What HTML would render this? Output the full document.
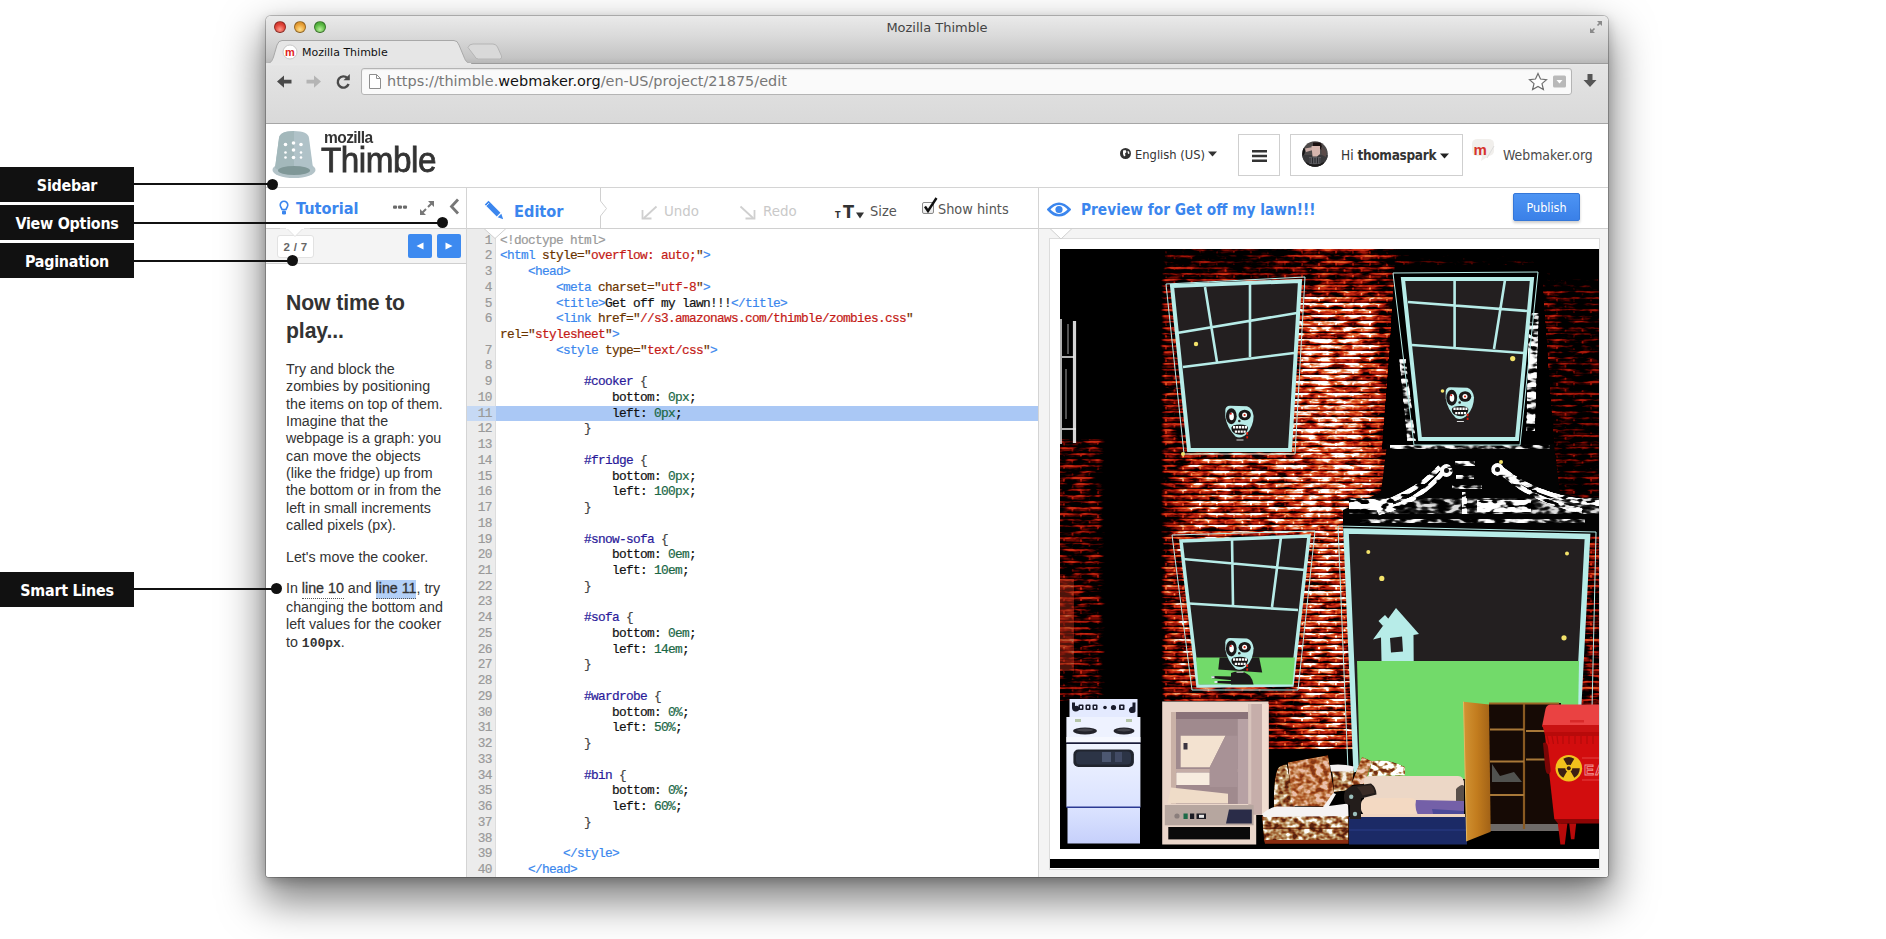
<!DOCTYPE html>
<html><head><meta charset="utf-8"><title>Mozilla Thimble</title>
<style>
*{box-sizing:border-box;margin:0;padding:0}
html,body{width:1886px;height:939px;overflow:hidden;background:#fff}
body{position:relative;font-family:"Liberation Sans",sans-serif;color:#333}
.abs{position:absolute}
.lbl{position:absolute;left:0;width:134px;height:35px;overflow:hidden;background:#111;color:#fff;font:bold 15.900px/38px "DejaVu Sans","Liberation Sans",sans-serif;text-align:center;letter-spacing:-0.25px}
.ln{position:absolute;height:2px;background:#111}
.dot{position:absolute;width:11px;height:11px;border-radius:50%;background:#111}
#win{position:absolute;left:266px;top:16px;width:1342px;height:861px;background:#fff;border-radius:5px 5px 3px 3px;box-shadow:0 20px 42px 4px rgba(0,0,0,.5),0 4px 12px rgba(0,0,0,.22),0 0 0 1px rgba(0,0,0,.22);overflow:hidden}
#chrome{position:absolute;left:0;top:0;width:100%;height:108px;background:linear-gradient(#eaeaea 0,#dadada 20px,#c4c4c4 42px,#b9b9b9 46.500px,#9c9c9c 46.500px,#9c9c9c 47.500px,#e9e9e9 47.500px,#e4e4e4 50px,#d9d9d9 107px);border-bottom:1px solid #a6a6a6}
#chrome>*{margin-top:-1px}

.tl{position:absolute;top:4.700px;margin-top:0 !important;width:12px;height:12px;border-radius:50%;border:1px solid rgba(0,0,0,.35)}
#title{position:absolute;left:0;top:3.500px;margin-top:0 !important;width:100%;text-align:center;font:13px/16px "DejaVu Sans","Liberation Sans",sans-serif;color:#444}
#tabtxt{position:absolute;left:36px;top:30.300px;font:11px/16px "DejaVu Sans","Liberation Sans",sans-serif;color:#111}
#url{position:absolute;left:95px;top:53px;width:1210.500px;height:26.500px;background:#fafafa;border:1px solid #b4b4b4;border-radius:3px;box-shadow:inset 0 1px 1px rgba(0,0,0,.08)}
#urltxt{position:absolute;left:25px;top:3px;font:14.450px/18px "DejaVu Sans","Liberation Sans",sans-serif;color:#777;white-space:pre}
#urltxt b{font-weight:normal;color:#111}

#app{position:absolute;left:0;top:108px;width:1342px;height:753px;background:#fff;font-family:"DejaVu Sans Condensed","DejaVu Sans","Liberation Sans",sans-serif}
#hdr{position:absolute;left:0;top:0;width:100%;height:64px;border-bottom:1px solid #d4d4d4}
.os{font-family:"DejaVu Sans Condensed","DejaVu Sans","Liberation Sans",sans-serif}
.hbtn{position:absolute;top:10px;height:42px;border:1px solid #cfcfcf;background:#fff}
#phdr{position:absolute;left:0;top:64px;width:100%;height:41px;border-bottom:1px solid #d0d0d0;background:#fff}
.vsep{position:absolute;top:64px;width:1px;background:#d4d4d4}
.blue{color:#3b86ee}
#pag{position:absolute;left:0;top:105px;width:200px;height:35px;background:#f4f4f4;border-bottom:1px solid #cfcfcf}
.pbtn{position:absolute;top:5px;width:24px;height:24px;background:#3d8af0;border-radius:2px}
#tut{position:absolute;left:20px;top:165px;width:160px;font-family:"Liberation Sans",sans-serif;color:#333}
#tut h1{font-size:21.2px;line-height:28px;font-weight:bold;color:#333;letter-spacing:-0.1px}
#tut p{font-size:14.25px;line-height:17.35px;margin-top:0}

.lbl{font-family:"DejaVu Sans Condensed","DejaVu Sans","Liberation Sans",sans-serif !important}
#ed{position:absolute;left:201px;top:105px;width:571px;height:648px;background:#fff;overflow:hidden}
#gut{position:absolute;left:0;top:0;width:29px;height:100%;background:#ececec;border-right:1px solid #ddd}
#code{position:absolute;left:0;top:3.600px;width:571px;font:12.800px/15.735px "Liberation Mono","DejaVu Sans Mono",monospace;letter-spacing:-0.681px;color:#111;-webkit-text-stroke:.2px}
.r{position:relative;height:15.735px;white-space:pre;padding-left:33px}
.r i{position:absolute;left:0;top:0;width:24.800px;text-align:right;font-style:normal;color:#999}
.r.hl{background:#aac8f5}
.r.hl i{background:#c6d9f4;width:29px;padding-right:4.200px}
.t{color:#3a87ee}.a{color:#6a3400}.s{color:#c41a16}.d{color:#999}.q{color:#2a1a9a}.n{color:#1a6644}.b{color:#444}

#pv{position:absolute;left:773px;top:105px;width:569px;height:648px;background:#f4f4f4;overflow:hidden}
#frame{position:absolute;left:10px;top:9px;width:551px;height:632px;background:#fff;border:1px solid #dcdcdc;overflow:hidden}
#pic{position:absolute;left:10px;top:10px;width:539px;height:600px;display:block}
</style></head><body>

<!-- callout labels -->
<div class="lbl" style="top:167px">Sidebar</div>
<div class="lbl" style="top:205px">View Options</div>
<div class="lbl" style="top:243px">Pagination</div>
<div class="lbl" style="top:572px">Smart Lines</div>

<div id="win">
 <div id="chrome">
  <div class="tl" style="left:8px;background:radial-gradient(circle at 50% 75%,#ff9a8a 0,#e0443a 55%,#c22a22 100%)"></div>
  <div class="tl" style="left:28px;background:radial-gradient(circle at 50% 75%,#ffe08a 0,#e9a23a 55%,#c8801e 100%)"></div>
  <div class="tl" style="left:48px;background:radial-gradient(circle at 50% 75%,#b8f09a 0,#5cba45 55%,#3c962c 100%)"></div>
  <div id="title">Mozilla Thimble</div>
  <svg class="abs" style="left:1323px;top:5px" width="14" height="14" viewBox="0 0 14 14"><path d="M8 1h5v5zM6 13H1V8z" fill="#8a8a8a"/><path d="M12 2L8.5 5.5M2 12l3.500-3.500" stroke="#8a8a8a" stroke-width="1.6"/></svg>
  <svg class="abs" style="left:0;top:24px" width="260" height="25" viewBox="0 0 260 25">
   <path d="M202 8.500Q203 5 207 5h20q3 0 4.500 3l4 9q1 3-2 3h-21q-3 0-4-3z" fill="#d9d9d9" stroke="#b5b5b5"/>
   <path d="M0 24.500C5 24.500 6 22 7.500 18L11 6Q12.500 1.500 16 1.500H188Q191.500 1.500 193 6L198 18C199.500 22 201 24.500 206 24.500" fill="#e6e6e6" stroke="#a8a8a8"/>
   <rect x="0" y="24" width="205" height="1" fill="#e6e6e6"/>
   <circle cx="24" cy="13" r="7" fill="#fff" stroke="#c8c8c8"/>
   <text x="24" y="17" text-anchor="middle" font-family="Liberation Sans,sans-serif" font-weight="bold" font-size="11" fill="#e0241c">m</text>
  </svg>
  <div id="tabtxt">Mozilla Thimble</div>
  <svg class="abs" style="left:9px;top:58px" width="80" height="18" viewBox="0 0 80 18">
   <path d="M2 8.600L9 2.500v4.200h7.500v3.800H9v4.200z" fill="#4a4a4a"/>
   <path d="M46 8.600L39 2.500v4.200h-7.500v3.800H39v4.200z" fill="#b4b4b4"/>
   <path d="M72.500 5.200A5.600 5.600 0 1 0 73.600 11" fill="none" stroke="#4a4a4a" stroke-width="2.400"/><path d="M68.500 7.200h6.300V1z" fill="#4a4a4a"/>
  </svg>
  <div id="url">
   <svg class="abs" style="left:7px;top:5px" width="12" height="15" viewBox="0 0 12 15"><path d="M.5.500h7l4 4v10H.5z" fill="#fff" stroke="#8e8e8e"/><path d="M7.500.500v4h4" fill="none" stroke="#8e8e8e"/></svg>
   <div id="urltxt">https://thimble.<b>webmaker.org</b>/en-US/project/21875/edit</div>
   <svg class="abs" style="left:1166px;top:3px" width="40" height="19" viewBox="0 0 40 19"><path d="M10 1.500l2.500 5.500 6 .600-4.500 4 1.400 5.900L10 14.400 4.600 17.500 6 11.600 1.500 7.600l6-.600z" fill="#fff" stroke="#6f6f6f" stroke-width="1.200"/><rect x="25" y="3.500" width="13" height="12" rx="1.500" fill="#b9b9b9"/><path d="M28.500 8h6l-3 3.500z" fill="#fff"/></svg>
  </div>
  <svg class="abs" style="left:1316px;top:58px" width="16" height="16" viewBox="0 0 16 16"><path d="M5.500 1h5v6h4L8 14 1.500 7h4z" fill="#555"/></svg>
 </div>
 <div id="app">
  <div id="hdr">
   <svg class="abs" style="left:6px;top:6px" width="45" height="49" viewBox="0 0 45 49">
    <ellipse cx="22" cy="40" rx="21.500" ry="8" fill="#b3c3c8"/>
    <path d="M3 38L7 8Q8 1 22 1Q36 1 37 8L41 38Q30 44 22 44Q12 44 3 38z" fill="#b0c2c8"/>
    <path d="M3 38L7 8Q8 1 22 1V44Q12 44 3 38z" fill="#a3b8bb"/>
    <ellipse cx="22" cy="40.500" rx="16" ry="4.500" fill="#7f9797"/>
    <g fill="#fff"><circle cx="13.500" cy="14.500" r="1.800"/><circle cx="21.500" cy="13" r="1.800"/><circle cx="29" cy="14.500" r="1.800"/><circle cx="13.500" cy="22.500" r="1.300"/><circle cx="21.500" cy="20" r="1.800"/><circle cx="29" cy="22.500" r="1.300"/><circle cx="13.500" cy="27.500" r="1.300"/><circle cx="21.500" cy="27.500" r="1.800"/><circle cx="29" cy="27.500" r="1.300"/></g>
   </svg>
   <div class="abs" style="left:57.500px;top:4px;font:bold 16.500px/18px 'Liberation Sans',sans-serif;color:#333;letter-spacing:-0.6px;transform:scaleX(.94);transform-origin:0 0">mozilla</div>
   <div class="abs" style="left:55px;top:16px;font:35px/40px 'Liberation Sans',sans-serif;color:#333;letter-spacing:-0.5px;transform:scaleX(.95);transform-origin:0 0;-webkit-text-stroke:.8px #333">Thimble</div>

   <svg class="abs" style="left:854px;top:24px" width="11" height="11" viewBox="0 0 11 11"><circle cx="5.500" cy="5.500" r="5.500" fill="#333"/><path d="M3 2.500l2.500-.500 1 2-1.500 1.500.500 2-1.500 1-1-2.500zM7.500 3l1.500.500.500 2-1.500.500z" fill="#fff"/></svg>
   <div class="abs os" style="left:869px;top:22px;font-size:12.800px;line-height:17px;color:#333">English (US)</div>
   <svg class="abs" style="left:942px;top:27px" width="9" height="6" viewBox="0 0 9 6"><path d="M0 .500h9L4.500 5.500z" fill="#333"/></svg>
   <div class="hbtn" style="left:972px;width:42px"><svg class="abs" style="left:13px;top:15px" width="15" height="12" viewBox="0 0 15 12"><path d="M0 1.250h15M0 6h15M0 10.750h15" stroke="#333" stroke-width="2.300"/></svg></div>
   <div class="hbtn" style="left:1024px;width:173px">
    <svg class="abs" style="left:10.500px;top:5.500px" width="26" height="26" viewBox="0 0 26 26"><clipPath id="avc"><circle cx="13" cy="13" r="12.800"/></clipPath><g clip-path="url(#avc)"><rect width="26" height="26" fill="#4e4a4a"/><rect x="0" y="14" width="26" height="12" fill="#3a3a3c"/><path d="M3 7.500l8-1.500 0 3-7 2z" fill="#c9aca6"/><path d="M9.500 5h8.500v8l-3 2.500h-4.500z" fill="#d6b6ae"/><path d="M11 1.500h8l1.500 8-2.500-1.500v-3h-7z" fill="#1a1010"/><path d="M0 7q3-1 3 3t-3 5z" fill="#141414"/><path d="M7 16h12v7H7z" fill="#5a5a5e"/><path d="M8 17v5M10.500 16.500v6M13 17v5M15.500 16.500v6M18 17v5" stroke="#2a2a2e" stroke-width="1"/><path d="M4 21q8 5 18 0v5H4z" fill="#1c1a1a"/><path d="M19 6l5 4v6l-4-2z" fill="#5a4a48"/></g></svg>
    <div class="abs os" style="left:50px;top:12px;font-size:13.500px;line-height:17px;color:#333;white-space:pre">Hi <b style="letter-spacing:-0.3px">thomaspark</b></div>
    <svg class="abs" style="left:149px;top:18px" width="9" height="6" viewBox="0 0 9 6"><path d="M0 .500h9L4.500 5.500z" fill="#222"/></svg>
   </div>
   <svg class="abs" style="left:1204px;top:13px" width="28" height="26" viewBox="0 0 28 26"><path d="M2 7Q2 2 8 2h10q6 0 6 5v7q0 4-5 5l-8 5 1-5H8q-6 0-6-5z" fill="#f1efec"/><path d="M24 9l-7 12" stroke="#ddd" stroke-width="1"/><text x="3.500" y="17.500" font-family="Liberation Sans,sans-serif" font-weight="bold" font-size="15" fill="#d6332d">m</text></svg>
   <div class="abs os" style="left:1237px;top:21.500px;font-size:13.900px;line-height:18px;color:#4a4a4a">Webmaker.org</div>
  </div>

  <div id="phdr">
   <svg class="abs" style="left:13px;top:12px" width="10" height="16" viewBox="0 0 10 16"><path d="M5 1.200a3.800 3.800 0 0 1 3.800 3.800c0 1.800-1.300 2.600-1.800 4.500h-4C2.500 7.600 1.200 6.800 1.200 5A3.800 3.800 0 0 1 5 1.200z" fill="none" stroke="#3b86ee" stroke-width="1.600"/><rect x="3" y="10.500" width="4" height="4" rx="1.200" fill="#3b86ee"/></svg>
   <div class="abs os blue" style="left:30px;top:10px;font-weight:bold;font-size:16.200px;line-height:22px">Tutorial</div>
   <svg class="abs" style="left:127px;top:16px" width="15" height="6" viewBox="0 0 15 6"><rect x="0" y="1.500" width="4" height="3.200" rx="1" fill="#6a6a6a"/><rect x="5" y="1.500" width="4" height="3.200" rx="1" fill="#6a6a6a"/><rect x="10" y="1.500" width="4" height="3.200" rx="1" fill="#6a6a6a"/></svg>
   <svg class="abs" style="left:153px;top:12px" width="16" height="16" viewBox="0 0 16 16"><path d="M9 1h6v6zM7 15H1V9z" fill="#777"/><path d="M13.500 2.500L9 7M2.500 13.500L7 9" stroke="#777" stroke-width="2"/></svg>
   <svg class="abs" style="left:183px;top:10px" width="11" height="17" viewBox="0 0 11 17"><path d="M9 1.500L2.500 8.500 9 15.500" fill="none" stroke="#777" stroke-width="2.800"/></svg>

   <svg class="abs" style="left:217px;top:11px" width="22" height="22" viewBox="0 0 24 24"><path d="M2 6l4-4 13 13-4 4z" fill="#3b86ee"/><path d="M16 20l4-4 2 6z" fill="#3b86ee"/><path d="M3.500 7.500l3-3" stroke="#fff" stroke-width="1"/></svg>
   <div class="abs os blue" style="left:248px;top:12px;font-weight:bold;font-size:16.200px;line-height:24px">Editor</div>
   <svg class="abs" style="left:334px;top:0" width="10" height="41" viewBox="0 0 10 41"><path d="M.500 0v13l6 7.500-6 7.500v13" fill="none" stroke="#d0d0d0"/></svg>
   <svg class="abs" style="left:375px;top:17px" width="17" height="15" viewBox="0 0 17 15"><path d="M15.500 1.500L3 13" stroke="#cfcfcf" stroke-width="1.800" fill="none"/><path d="M1.500 5v8.500h9" stroke="#cfcfcf" stroke-width="1.800" fill="none"/></svg>
   <div class="abs os" style="left:398px;top:13px;font-size:14.900px;line-height:20px;color:#c9c9c9">Undo</div>
   <svg class="abs" style="left:473px;top:17px" width="17" height="15" viewBox="0 0 17 15"><path d="M1.500 1.500L14 13" stroke="#cfcfcf" stroke-width="1.800" fill="none"/><path d="M15.500 5v8.500h-9" stroke="#cfcfcf" stroke-width="1.800" fill="none"/></svg>
   <div class="abs os" style="left:497px;top:13px;font-size:14.900px;line-height:20px;color:#c9c9c9">Redo</div>
   <div class="abs os" style="left:569px;top:21px;font-weight:bold;font-size:9px;line-height:12px;color:#333">T</div>
   <div class="abs os" style="left:577px;top:12px;font-weight:bold;font-size:18px;line-height:24px;color:#333">T</div>
   <svg class="abs" style="left:590px;top:24px" width="8" height="7" viewBox="0 0 8 7"><path d="M0 .500h8L4 6.500z" fill="#333"/></svg>
   <div class="abs os" style="left:604px;top:13px;font-size:14.500px;line-height:20px;color:#555">Size</div>
   <div class="abs" style="left:656px;top:14px;width:12px;height:12px;border:1px solid #8a8a8a;border-radius:2px;background:linear-gradient(#fff,#e8e8e8)"></div>
   <svg class="abs" style="left:656px;top:8px" width="18" height="18" viewBox="0 0 18 18"><path d="M3 10.500l3 4.500L14.500 2" fill="none" stroke="#111" stroke-width="2.400"/></svg>
   <div class="abs os" style="left:672px;top:11px;font-size:14.350px;line-height:20px;color:#555">Show hints</div>

   <svg class="abs" style="left:781px;top:14px" width="24" height="15" viewBox="0 0 24 15"><path d="M1.500 7.500Q12-4 22.500 7.500Q12 19 1.500 7.500z" fill="#fff" stroke="#3b86ee" stroke-width="2.600"/><circle cx="12" cy="7.500" r="3.600" fill="#3b86ee"/></svg>
   <div class="abs os blue" style="left:815px;top:11px;font-weight:bold;font-size:15.300px;line-height:22px;white-space:pre">Preview for Get off my lawn!!!</div>
   <div class="abs os" style="left:1247px;top:5px;width:67px;height:28px;background:linear-gradient(#4d94f3,#3a80e8);border:1px solid #3577d8;border-radius:2px;box-shadow:0 2px 3px rgba(0,0,0,.2);color:#fff;font-size:12.500px;line-height:28px;text-align:center">Publish</div>
  </div>
  <div class="vsep" style="left:200px;height:689px"></div>
  <div class="vsep" style="left:772px;height:689px"></div>

  <div id="pag">
   <div class="abs" style="left:11px;top:6px;width:37px;height:23px;background:#fff;border:1px solid #e2e2e2;border-radius:3px;font:bold 11.500px/22px 'Liberation Sans',sans-serif;color:#666;text-align:center;letter-spacing:.3px">2 / 7</div>
   <svg class="abs" style="left:14px;top:-1px" width="30" height="10" viewBox="0 0 30 10"><path d="M0 .500h7l8 8 8-8h7" fill="#fff" stroke="#e2e2e2"/><path d="M6 0h18" stroke="#fff" stroke-width="2"/></svg>
   <div class="pbtn" style="left:142px"><svg class="abs" style="left:8px;top:8px" width="8" height="8" viewBox="0 0 8 8"><path d="M7.500 .500v7L.500 4z" fill="#fff"/></svg></div>
   <div class="pbtn" style="left:171px"><svg class="abs" style="left:8px;top:8px" width="8" height="8" viewBox="0 0 8 8"><path d="M.500 .500v7L7.500 4z" fill="#fff"/></svg></div>
  </div>

  <div id="ed"><div id="gut"></div><div id="code">
<div class="r"><i>1</i><span class="d">&lt;!doctype html&gt;</span></div>
<div class="r"><i>2</i><span class="t">&lt;html</span> <span class="a">style=&quot;</span><span class="s">overflow: auto;</span><span class="a">&quot;</span><span class="t">&gt;</span></div>
<div class="r"><i>3</i>    <span class="t">&lt;head&gt;</span></div>
<div class="r"><i>4</i>        <span class="t">&lt;meta</span> <span class="a">charset=&quot;</span><span class="s">utf-8</span><span class="a">&quot;</span><span class="t">&gt;</span></div>
<div class="r"><i>5</i>        <span class="t">&lt;title&gt;</span>Get off my lawn!!!<span class="t">&lt;/title&gt;</span></div>
<div class="r"><i>6</i>        <span class="t">&lt;link</span> <span class="a">href=&quot;</span><span class="s">//s3.amazonaws.com/thimble/zombies.css</span><span class="a">&quot;</span></div>
<div class="r"><i></i><span class="a">rel=&quot;</span><span class="s">stylesheet</span><span class="a">&quot;</span><span class="t">&gt;</span></div>
<div class="r"><i>7</i>        <span class="t">&lt;style</span> <span class="a">type=&quot;</span><span class="s">text/css</span><span class="a">&quot;</span><span class="t">&gt;</span></div>
<div class="r"><i>8</i></div>
<div class="r"><i>9</i>            <span class="q">#cooker</span> <span class="b">{</span></div>
<div class="r"><i>10</i>                bottom: <span class="n">0px</span>;</div>
<div class="r hl"><i>11</i>                left: <span class="n">0px</span>;</div>
<div class="r"><i>12</i>            <span class="b">}</span></div>
<div class="r"><i>13</i></div>
<div class="r"><i>14</i>            <span class="q">#fridge</span> <span class="b">{</span></div>
<div class="r"><i>15</i>                bottom: <span class="n">0px</span>;</div>
<div class="r"><i>16</i>                left: <span class="n">100px</span>;</div>
<div class="r"><i>17</i>            <span class="b">}</span></div>
<div class="r"><i>18</i></div>
<div class="r"><i>19</i>            <span class="q">#snow-sofa</span> <span class="b">{</span></div>
<div class="r"><i>20</i>                bottom: <span class="n">0em</span>;</div>
<div class="r"><i>21</i>                left: <span class="n">10em</span>;</div>
<div class="r"><i>22</i>            <span class="b">}</span></div>
<div class="r"><i>23</i></div>
<div class="r"><i>24</i>            <span class="q">#sofa</span> <span class="b">{</span></div>
<div class="r"><i>25</i>                bottom: <span class="n">0em</span>;</div>
<div class="r"><i>26</i>                left: <span class="n">14em</span>;</div>
<div class="r"><i>27</i>            <span class="b">}</span></div>
<div class="r"><i>28</i></div>
<div class="r"><i>29</i>            <span class="q">#wardrobe</span> <span class="b">{</span></div>
<div class="r"><i>30</i>                bottom: <span class="n">0%</span>;</div>
<div class="r"><i>31</i>                left: <span class="n">50%</span>;</div>
<div class="r"><i>32</i>            <span class="b">}</span></div>
<div class="r"><i>33</i></div>
<div class="r"><i>34</i>            <span class="q">#bin</span> <span class="b">{</span></div>
<div class="r"><i>35</i>                bottom: <span class="n">0%</span>;</div>
<div class="r"><i>36</i>                left: <span class="n">60%</span>;</div>
<div class="r"><i>37</i>            <span class="b">}</span></div>
<div class="r"><i>38</i></div>
<div class="r"><i>39</i>         <span class="t">&lt;/style&gt;</span></div>
<div class="r"><i>40</i>    <span class="t">&lt;/head&gt;</span></div>
<div class="r"><i>41</i>    <span class="t">&lt;body&gt;</span></div>
  </div>
   <svg class="abs" style="left:13px;top:-1px" width="30" height="12" viewBox="0 0 30 12"><path d="M0 .500h4l11 10 11-10h4" fill="#fff" stroke="#d0d0d0"/><path d="M4.500 0h21" stroke="#fff" stroke-width="2"/></svg>
  </div>
  <div id="pv">
   <div id="frame">
<svg id="pic" viewBox="0 0 539 600">
 <defs>
  <linearGradient id="fadeR" x1="1" y1="0" x2="0" y2="0"><stop offset="0" stop-color="#000"/><stop offset="1" stop-color="#000" stop-opacity="0"/></linearGradient>
  <linearGradient id="fadeL" x1="0" y1="0" x2="1" y2="0"><stop offset="0" stop-color="#000"/><stop offset="1" stop-color="#000" stop-opacity="0"/></linearGradient>
  <linearGradient id="ck" x1="0" y1="0" x2="0" y2="1"><stop offset="0" stop-color="#f0f4ff"/><stop offset="1" stop-color="#dae2ff"/></linearGradient>
  <linearGradient id="ck2" x1="0" y1="0" x2="0" y2="1"><stop offset="0" stop-color="#dbe3ff"/><stop offset="1" stop-color="#c6d0fb"/></linearGradient>
  <linearGradient id="wood" x1="0" y1="0" x2="1" y2="0"><stop offset="0" stop-color="#d29434"/><stop offset=".5" stop-color="#c27c1e"/><stop offset="1" stop-color="#a26216"/></linearGradient>
  <pattern id="flo" width="23" height="19" patternUnits="userSpaceOnUse">
   <rect width="23" height="19" fill="#b79474"/>
   <circle cx="5" cy="5" r="3.600" fill="#7a2a1c"/><circle cx="16" cy="13" r="4" fill="#8a3a24"/><circle cx="15" cy="3" r="2.600" fill="#e8dccb"/><circle cx="4" cy="14" r="3" fill="#e4d4c0"/><circle cx="10" cy="9" r="2" fill="#5a3a28"/><circle cx="21" cy="7" r="2" fill="#d8c4a8"/>
  </pattern>
  <filter id="bl" filterUnits="userSpaceOnUse" x="0" y="0" width="539" height="600"><feGaussianBlur stdDeviation="11"/></filter>
  <filter id="bwf" filterUnits="userSpaceOnUse" x="0" y="0" width="539" height="600" color-interpolation-filters="sRGB">
   <feTurbulence type="fractalNoise" baseFrequency="0.09 0.2" numOctaves="2" seed="5" result="t0"/>
   <feColorMatrix in="t0" type="matrix" values="2.4 0 0 0 -0.7  2.4 0 0 0 -0.7  2.4 0 0 0 -0.7  0 0 0 0 1" result="t"/>
   <feComposite in="SourceGraphic" in2="t" operator="arithmetic" k1="1.7" k2="0.15" k3="0" k4="0" result="m"/>
   <feComponentTransfer in="m"><feFuncR type="table" tableValues="0 0 .15 .8 1 1"/><feFuncG type="table" tableValues="0 0 .15 .8 1 1"/><feFuncB type="table" tableValues="0 0 .15 .8 1 1"/></feComponentTransfer>
   <feComposite in2="SourceGraphic" operator="in"/>
  </filter>
  <filter id="flof" filterUnits="userSpaceOnUse" x="190" y="495" width="170" height="105" color-interpolation-filters="sRGB">
   <feTurbulence type="fractalNoise" baseFrequency="0.16 0.2" numOctaves="2" seed="3" result="t0"/>
   <feColorMatrix in="t0" type="matrix" values="2.6 0 0 0 -0.8  2.6 0 0 0 -0.8  2.6 0 0 0 -0.8  0 0 0 0 1" result="t"/>
   <feComposite in="SourceGraphic" in2="t" operator="arithmetic" k1="1.500" k2="0.25" k3="0" k4="0" result="m"/>
   <feComponentTransfer in="m">
    <feFuncR type="table" tableValues="0.165 0.290 0.416 0.518 0.596 0.659 0.706 0.769 0.847 0.925 1.000"/>
    <feFuncG type="table" tableValues="0.078 0.110 0.165 0.235 0.329 0.439 0.541 0.643 0.769 0.878 1.000"/>
    <feFuncB type="table" tableValues="0.031 0.047 0.071 0.110 0.157 0.251 0.345 0.471 0.627 0.800 1.000"/>
   </feComponentTransfer>
   <feComposite in2="SourceGraphic" operator="in"/>
  </filter>
  <filter id="wallf" filterUnits="userSpaceOnUse" x="0" y="0" width="539" height="600" color-interpolation-filters="sRGB">
   <feTurbulence type="fractalNoise" baseFrequency="0.07 0.19" numOctaves="3" seed="11" result="t0"/>
   <feColorMatrix in="t0" type="matrix" values="2.1 0 0 0 -0.55  2.1 0 0 0 -0.55  2.1 0 0 0 -0.55  0 0 0 0 1" result="t"/>
   <feComposite in="SourceGraphic" in2="t" operator="arithmetic" k1="1.2" k2="0.5" k3="0" k4="-0.13" result="m"/>
   <feComponentTransfer in="m">
    <feFuncR type="table" tableValues="0.000 0.000 0.000 0.102 0.227 0.361 0.486 0.596 0.682 0.745 0.792 0.831 0.863 0.886 0.910 0.925 0.941 0.949 0.957 0.973 1.000"/>
    <feFuncG type="table" tableValues="0.000 0.000 0.000 0.000 0.008 0.024 0.047 0.078 0.110 0.141 0.180 0.227 0.290 0.361 0.447 0.549 0.659 0.753 0.839 0.910 1.000"/>
    <feFuncB type="table" tableValues="0.000 0.000 0.000 0.000 0.000 0.000 0.016 0.031 0.047 0.063 0.078 0.094 0.118 0.157 0.220 0.345 0.502 0.659 0.784 0.878 1.000"/>
   </feComponentTransfer>
  </filter>
  <radialGradient id="L1" cx="265" cy="170" r="1" gradientUnits="userSpaceOnUse" gradientTransform="translate(265 170) scale(150 300) translate(-265 -170)">
   <stop offset="0" stop-color="#b0b0b0"/><stop offset=".4" stop-color="#909090"/><stop offset=".8" stop-color="#606060"/><stop offset="1" stop-color="#000"/>
  </radialGradient>
  <radialGradient id="L2" cx="200" cy="380" r="1" gradientUnits="userSpaceOnUse" gradientTransform="translate(200 380) scale(150 160) translate(-200 -380)">
   <stop offset="0" stop-color="#8a8a8a"/><stop offset=".7" stop-color="#707070"/><stop offset="1" stop-color="#000" stop-opacity="0"/>
  </radialGradient>
  <radialGradient id="L3" cx="520" cy="200" r="1" gradientUnits="userSpaceOnUse" gradientTransform="translate(520 200) scale(90 260) translate(-520 -200)">
   <stop offset="0" stop-color="#6a6a6a"/><stop offset=".7" stop-color="#505050"/><stop offset="1" stop-color="#000" stop-opacity="0"/>
  </radialGradient>
  <radialGradient id="glow1" cx="265" cy="170" r="1" gradientUnits="userSpaceOnUse" gradientTransform="translate(265 170) scale(130 260) translate(-265 -170)">
   <stop offset="0" stop-color="#f0742a"/><stop offset=".3" stop-color="#e2451a"/><stop offset=".62" stop-color="#c01c08"/><stop offset=".85" stop-color="#6a0800"/><stop offset="1" stop-color="#000"/>
  </radialGradient>
  <radialGradient id="glow2" cx="215" cy="390" r="1" gradientUnits="userSpaceOnUse" gradientTransform="translate(215 390) scale(140 150) translate(-215 -390)">
   <stop offset="0" stop-color="#d8381a"/><stop offset=".6" stop-color="#b81a08"/><stop offset=".85" stop-color="#600600"/><stop offset="1" stop-color="#000" stop-opacity="0"/>
  </radialGradient>
  <radialGradient id="glow3" cx="520" cy="170" r="1" gradientUnits="userSpaceOnUse" gradientTransform="translate(520 170) scale(60 130) translate(-520 -170)">
   <stop offset="0" stop-color="#a81405"/><stop offset=".6" stop-color="#7a0a02"/><stop offset="1" stop-color="#000" stop-opacity="0"/>
  </radialGradient>
  <pattern id="brick" width="17" height="12" patternUnits="userSpaceOnUse">
   <path d="M0 1h17M0 7h17" stroke="#fff" stroke-width="2" opacity=".6"/>
   <path d="M4 2v3M12.500 8v3" stroke="#fff" stroke-width="1.800" opacity=".58"/>
   <path d="M0 5.300h17M0 11.300h17" stroke="#000" stroke-width="1.400" opacity=".55"/>
  </pattern>
  <radialGradient id="mk" cx="250" cy="250" r="1" gradientUnits="userSpaceOnUse" gradientTransform="translate(250 250) scale(150 300) translate(-250 -250)">
   <stop offset="0" stop-color="#fff"/><stop offset=".6" stop-color="#bbb"/><stop offset="1" stop-color="#000"/>
  </radialGradient>
  <mask id="bm"><rect width="539" height="600" fill="url(#mk)"/></mask>
  <g id="lmap">
   <g filter="url(#bl)">
    <rect x="100" y="-20" width="452" height="540" fill="#4c4c4c"/>
    <rect x="130" y="200" width="170" height="95" fill="#8c8c8c"/>
    <rect x="232" y="50" width="80" height="230" fill="#aaaaaa"/>
    <rect x="250" y="90" width="45" height="150" fill="#bcbcbc"/>
    <rect x="240" y="280" width="50" height="230" fill="#929292"/>
    <rect x="105" y="290" width="40" height="150" fill="#747474"/>
    <rect x="470" y="-20" width="80" height="60" fill="#111"/>
    <rect x="100" y="-20" width="135" height="46" fill="#303030"/><rect x="330" y="-20" width="150" height="40" fill="#151515"/><rect x="90" y="20" width="32" height="260" fill="#4c4c4c"/>
    <rect x="485" y="30" width="70" height="260" fill="#363636"/>
   </g>
   <rect x="0" y="190" width="54" height="262" fill="#3e3e3e"/>
   <rect x="0" y="330" width="14" height="95" fill="#585858"/>
   <rect x="54" y="0" width="41" height="600" fill="#000"/>
   <rect x="38" y="0" width="16" height="600" fill="url(#fadeR)"/>
   <rect x="95" y="0" width="10" height="600" fill="url(#fadeL)"/>
   <rect x="0" y="0" width="100" height="190" fill="#000"/>
   <path d="M335 16L481 16 494 200 322 200 329 110z" fill="#000" opacity=".88"/>
  </g>
  <mask id="lmask" maskUnits="userSpaceOnUse" x="0" y="0" width="539" height="600"><g filter="url(#gain)"><use href="#lmap"/></g></mask>
  <filter id="gain" filterUnits="userSpaceOnUse" x="0" y="0" width="539" height="600" color-interpolation-filters="sRGB"><feComponentTransfer><feFuncR type="linear" slope="2.2" intercept="-0.25"/><feFuncG type="linear" slope="2.2" intercept="-0.25"/><feFuncB type="linear" slope="2.2" intercept="-0.25"/></feComponentTransfer></filter>
 </defs>
 <rect width="539" height="600" fill="#000"/>
 <g filter="url(#wallf)">
  <rect width="539" height="600" fill="#000"/>
  <use href="#lmap"/>
  <rect width="539" height="600" fill="url(#brick)" mask="url(#lmask)"/>
 </g>
 <path d="M1 70v125M0 108h14M0 180h16" stroke="#ddd" stroke-width="2" opacity=".8"/><path d="M14.500 72v122" stroke="#eee" stroke-width="3.200" opacity=".9"/><path d="M8 75v30M6 120v50" stroke="#888" stroke-width="2" opacity=".6"/>
 <rect x="0" y="330" width="14" height="92" fill="#8a2414" opacity=".55"/>
 <rect x="0" y="500" width="539" height="100" fill="#000"/>
 <rect x="0" y="452" width="205" height="100" fill="#000"/>
 <!-- pediment -->
 <path d="M327 195h167l6 48 39 12v32H283v-26l38-18z" fill="#030303"/>
 <g filter="url(#bwf)">
  <path d="M289 249h250v16H289z" fill="#5c5c5c"/>
  <path d="M289 250h44v11h-44zM417 251h54v12h-54z" fill="#e0e0e0"/>
  <path d="M300 260q50-10 80-42M318 264q42-12 66-42" stroke="#e8e8e8" stroke-width="5" fill="none"/>
  <path d="M539 254q-60-4-100-36M522 262q-54-12-82-40" stroke="#e8e8e8" stroke-width="5" fill="none"/>
  <circle cx="386.500" cy="221.500" r="6.500" fill="#fff"/><circle cx="437.500" cy="220.500" r="6.500" fill="#fff"/>
  <rect x="402" y="243" width="4.500" height="22" fill="#fff"/>
  <path d="M395 212h20v5h-20zM396 226h18v4h-18zM392 236h30v4h-30z" fill="#9a9a9a"/>
  <path d="M469 64l10 0 -4 118h-9z" fill="#9c9c9c"/>
  <path d="M339 110l7 0 10 82h-9z" fill="#7a7a7a"/>
  <path d="M330 196h160v4h-160z" fill="#7a7a7a"/>
  <path d="M300 270h225v4h-225z" fill="#777"/>
 </g>
 <circle cx="386.500" cy="221.500" r="2.500" fill="#111"/><circle cx="437.500" cy="220.500" r="2.500" fill="#111"/>
 <!-- window 1 -->
 <g stroke="#b7ece8" stroke-linejoin="miter">
  <path d="M106 35L245 28 235 205 124 205z" fill="none" stroke-width="1"/>
  <path d="M112 37L240 32 230 201 129 201z" fill="#231f20" stroke-width="4"/>
  <path d="M117 84L237 64M123 118L234 104M145 38L157 113M190 35L190 108" stroke-width="2.600" fill="none"/>
 </g>
 <!-- window 2 -->
 <g stroke="#b7ece8">
  <path d="M333 24L478 23 460 196 354 196z" fill="none" stroke-width="1"/>
  <path d="M343 30L472 30 457 190 360 190z" fill="#231f20" stroke-width="4"/>
  <path d="M348 53L467 62M352 96L464 104M394.600 31V98M445 31L434 100" stroke-width="2.600" fill="none"/>
 </g>
 <!-- window 3 -->
 <g stroke="#b7ece8">
  <path d="M112 286L255 282 238 441 132 441z" fill="none" stroke-width="1"/>
  <path d="M121 292L249 287 232 436 138 437z" fill="#231f20" stroke-width="3.500"/>
  <path d="M136 408.500H235L232.500 435.500H138.500z" fill="#72da6a" stroke="none"/>
  <path d="M123 310L245 321M129 354.500L238 361M172 289L173 356M221 288L212 358" stroke-width="2.600" fill="none"/>
 </g>
 <!-- window 4 -->
 <g>
  <path d="M286 282L527.500 287.500 518 470 296 520z" fill="#231f20" stroke="#b7ece8" stroke-width="5.500"/>
  <path d="M278 277L536 283 532 460M288 520L278 277" fill="none" stroke="#b7ece8" stroke-width="1"/>
  <path d="M297 412H519L517 530H300z" fill="#72da6a"/>
  <path d="M313 390.500L336 359 359 385 353.500 386 353.700 412H321.500L321 388.500z" fill="#b7ece8"/>
  <path d="M318.500 372L325 366 329.500 371 323 377z" fill="#b7ece8"/>
  <path d="M330 389l12-1.500 1 15-12 1z" fill="#231f20"/>
 </g>
 <!-- stars -->
 <g fill="#f3e26a"><circle cx="136" cy="95" r="2.200"/><circle cx="123" cy="205" r="2"/><circle cx="452.700" cy="109.600" r="2.600"/><circle cx="382.500" cy="142" r="1.800"/><circle cx="308.300" cy="303" r="2"/><circle cx="321.800" cy="329.400" r="2.600"/><circle cx="507" cy="304.500" r="2"/><circle cx="504" cy="388.800" r="2.600"/><circle cx="441" cy="213" r="2"/></g>
 <!-- zombies -->
 <g id="z1"><path d="M165.300 161Q165.500 157 170 156.800L187 157.300Q192.500 159 193.600 167Q193.500 177 187 184.500Q181 190.500 175.500 187.500Q167 179 165.300 168z" fill="#b7ece8"/><ellipse cx="171.300" cy="167.200" rx="5.400" ry="8" fill="#1a1718"/><ellipse cx="184.700" cy="166" rx="6.200" ry="5.200" fill="#1a1718"/><ellipse cx="171.600" cy="167.400" rx="2.300" ry="3.800" fill="#fff"/><circle cx="170.800" cy="164.800" r="1" fill="#d01010"/><circle cx="184.600" cy="166" r="2.500" fill="#fff"/><circle cx="184.600" cy="166" r="1.100" fill="#c8200c"/><circle cx="179.300" cy="172" r="1.300" fill="#2a2626"/><path d="M171.500 178.500Q172 175.500 180 175.500Q188 175.500 188 179Q187.500 183.500 183 185.500Q178 186.500 174 184Q171 181.500 171.500 178.500z" fill="#151313"/><path d="M173 178.300h14" stroke="#fff" stroke-width="2.400" stroke-dasharray="2.300 .7"/><path d="M174.800 182.600h11" stroke="#fff" stroke-width="2.200" stroke-dasharray="2.200 .7"/><rect x="186.300" y="183.200" width="1.800" height="2.600" fill="#e01808"/><rect x="186.300" y="187.200" width="1.800" height="2.200" fill="#e01808"/><path d="M176.500 191h7" stroke="#ddd" stroke-width="1"/></g>
 <use href="#z1" x="220.400" y="-18.500"/>
 <path d="M159.600 408.500H199.200L202.200 423.400L158.300 420.400z" fill="#1d1a1b"/>
 <path d="M171 424Q182 420 190 427Q193 431 193.500 435.500H171z" fill="#1d1a1b"/>
 <path d="M172 427.500L152 427v2.200l20 2zM172 432L155 432v2l17 1z" fill="#1d1a1b"/>
 <rect x="151.500" y="427.200" width="3" height="2" fill="#dfe9ee"/><rect x="154.500" y="432" width="3" height="2" fill="#dfe9ee"/>
 <use href="#z1" x="0" y="232.200"/>

 <!-- cooker -->
 <g>
  <rect x="9.500" y="450" width="68" height="19" fill="#e4eaff"/>
  <g fill="#1a1c2c"><path d="M12 453.500h3v3.500q4-1 4.500 2.500-.500 3.500-4.500 3-3-.500-3-4z"/><rect x="18.500" y="455.500" width="5" height="5.500" rx="1"/><rect x="25.500" y="455.500" width="5" height="5.500" rx="1"/><rect x="32.500" y="455.500" width="5" height="5.500" rx="1"/><circle cx="45" cy="458.500" r="1.800"/><circle cx="53.500" cy="458.500" r="2.600"/><rect x="59" y="455.500" width="5.500" height="5.500" rx="1"/><path d="M72.500 453.500h3v9q-1 2-4.500 1.500-2.500-1-2-4 1-2.500 3.500-2.500z"/></g>
  <g fill="#e4eaff"><rect x="20" y="457" width="2" height="2.500"/><rect x="27" y="457" width="2" height="2.500"/><rect x="34" y="457" width="2" height="2.500"/><rect x="60.800" y="457" width="2" height="2.500"/></g>
  <rect x="6.400" y="468" width="74" height="26" fill="#eef2ff"/>
  <rect x="15" y="470" width="6" height="3" fill="#b4c4a8"/><rect x="66" y="470" width="6" height="3" fill="#b4c4a8"/>
  <ellipse cx="25" cy="482" rx="12" ry="3.400" fill="#23232b"/><ellipse cx="64" cy="482" rx="10.500" ry="3.400" fill="#23232b"/>
  <ellipse cx="25" cy="481" rx="8" ry="1.500" fill="#44444c"/><ellipse cx="64" cy="481" rx="7" ry="1.500" fill="#44444c"/>
  <rect x="6.400" y="488" width="74" height="5" fill="#f6f8ff"/>
  <rect x="6.400" y="493.300" width="74" height="1.700" fill="#1a1c3a"/>
  <rect x="6.400" y="495" width="74" height="63" fill="url(#ck)"/>
  <rect x="13.400" y="500.500" width="60.500" height="17.500" rx="5" fill="#20242e"/>
  <rect x="16" y="502.500" width="55" height="13" rx="4" fill="#2c3446"/>
  <rect x="42" y="503" width="9" height="10" fill="#55607c" opacity=".8"/><rect x="55" y="503" width="7" height="10" fill="#4a5470" opacity=".7"/>
  <rect x="6.400" y="557.500" width="74" height="1.500" fill="#2c3a94"/>
  <rect x="7.500" y="559" width="72.500" height="35.500" fill="url(#ck2)"/>
 </g>
 <!-- fridge -->
 <g>
  <path d="M102.200 452.400H208.500V566H196.200V595.600H102.200z" fill="#ead6ca"/>
  <rect x="111" y="463" width="77.300" height="92" fill="#a08a8e"/>
  <rect x="111" y="463" width="77.300" height="7" fill="#8a7279"/>
  <path d="M177.800 470h10.500v85h-10.500z" fill="#b7a1a4"/>
  <path d="M111 463h5v92h-5z" fill="#c9b1a6"/>
  <path d="M120.700 486.700H165.500L149.700 518.300H120.700z" fill="#f3e2d0"/>
  <path d="M116.300 523.600H149.700V536H116.300z" fill="#f7ecdf"/>
  <path d="M116 520h62v3h-62z" fill="#c4aca6"/>
  <path d="M111 538.500L168 544.700V554.400H107.500z" fill="#efdcc8"/>
  <path d="M149.700 518.300L165.500 486.700H177.800V538H149.700z" fill="#a89296"/>
  <rect x="123.500" y="494" width="4" height="6.500" fill="#3a3440"/>
  <path d="M188.300 455H208.500V565.800H188.300z" fill="#c6aeaa"/>
  <path d="M202 455h6.500v110.800H202z" fill="#f0dcd0"/>
  <path d="M188.300 455h3v100h-3z" fill="#d8c4bc"/>
  <rect x="104.800" y="556" width="88.800" height="20.300" fill="#b6a69f"/>
  <path d="M169 560.500h22.800v14H166z" fill="#2a2c48"/>
  <circle cx="117" cy="567" r="2.600" fill="#8a7e7c"/><rect x="123.500" y="564.500" width="4.200" height="5.500" fill="#1c6a48"/><rect x="130" y="564.500" width="4.200" height="5.500" fill="#1c1c24"/><rect x="136.500" y="564.500" width="9.500" height="5.500" fill="#1c1c24"/><rect x="139" y="565.800" width="5" height="3" fill="#e8e8e8"/>
  <rect x="108.300" y="578" width="81.700" height="12.400" fill="#0a0a0a"/>
 </g>
 <!-- armchair -->
 <g filter="url(#flof)">
  <path d="M291 536l11-28 10 4.300-7.400 22.700z" fill="#b0b0b0"/>
  <path d="M312 512q18-2 33 6l0 8.500-37 .5z" fill="#e4e4e4"/>
  <path d="M214 560q-1-30 4-41 4-4 9-3.500l8 42z" fill="#8c8c8c"/>
  <path d="M272 522h22l-3 19-17 2z" fill="#8a8a8a"/>
  <path d="M227.800 513.600L268 506.200 274 543.400 264.400 557.500 232.700 557z" fill="#a4a4a4"/>
  <path d="M202 567h86.500v24.500H204z" fill="#909090"/>
  <path d="M203 578.500h85v1.600h-85z" fill="#3a3a3a"/>
 </g>
 <path d="M227.800 513.600L268 506.200 274 543.400 264.400 557.500 232.700 557z" fill="#c8541c" opacity=".38"/>
 <path d="M291 536l11-28 10 4.300-7.400 22.700z" fill="#c8541c" opacity=".3"/>
 <path d="M204 591h84.500v3.700H205z" fill="#8a2c10"/>
 <path d="M270 516q12-1.500 24 1.500l-1 5h-22z" fill="#f4f2f2"/>
 <path d="M202 565q6-6 15-7.500l46 .5 10-14 3 1-7 12 19-2.500 .500 12.500-85 1z" fill="#f5f3f3"/>
 <!-- sofa -->
 <g>
  <path d="M304 531q0-4 6-4h88q6 0 6 8v34h-100z" fill="#ecd7c6"/>
  <path d="M396 540q6-6 8-3v32h-8z" fill="#5a504a"/>
  <rect x="301" y="549" width="56" height="17" rx="6" fill="#f3d9c2"/>
  <path d="M356 551l48 1v17h-44q-6-8-4-18z" fill="#7460a8"/>
  <path d="M372 560l32 2v7h-30z" fill="#4c4a98"/>
  <rect x="296" y="565" width="109" height="5" fill="#efd5c0"/>
  <path d="M289 568h118v27.500h-118z" fill="#1b2a66"/>
  <path d="M289 581h118" stroke="#2a3c88" stroke-width="1"/>
  <path d="M284 549Q283 538 296 536.500L311 534.500Q316.500 538.500 316.500 545.500L301 549.500V570H290V556Q284 556 284 549z" fill="#231d1b"/>
  <path d="M297 538l14-2q3 3 3.500 8l-12 2.500q-2-5-5.500-8.500z" fill="#3a2c26"/>
  <circle cx="291.200" cy="547.700" r="2.200" fill="#9cc0bc"/><circle cx="295" cy="565" r="2.200" fill="#9cc0bc"/>
 </g>
 <!-- wardrobe -->
 <g>
  <rect x="429" y="454" width="72" height="128" fill="#160a05"/>
  <rect x="429" y="575" width="72" height="7" fill="#6e6a68"/>
  <path d="M429 454.500h70" stroke="#9a6424" stroke-width="2"/>
  <path d="M464 455v125" stroke="#8a5a22" stroke-width="2.200"/>
  <path d="M430 480.500h34M466 482h20M430 512.500h34M466 510.500h22M430 546h34" stroke="#a87838" stroke-width="2"/>
  <path d="M432 515l8 12 14-4 8 10h-30z" fill="#9aa" opacity=".45"/>
  <path d="M403.500 452.700L429 455.600 430.700 582.700 406.700 592.300z" fill="url(#wood)"/>
  <path d="M403.500 452.700L406.700 592.300" stroke="#e8b860" stroke-width="1"/>
 </g>
 <!-- bin -->
 <g>
  <path d="M482 477.500L485.500 460Q486.500 455.500 491 455.500H539V478z" fill="#ea4242"/>
  <path d="M482 476h57v7.500h-54.500z" fill="#c91212"/>
  <path d="M484.600 483H539V570H494.300z" fill="#d20d0e"/>
  <path d="M484.600 483H539v4h-54z" fill="#b80a0a"/>
  <path d="M487 487l2 8M492 487l1.500 8M497 487l1 8M503 487v8M509 487v8M515 487v8M521 487v8M527 487v8M533 487v8" stroke="#b40a0a" stroke-width="1.200"/>
  <path d="M483 494q4-2 5 4l2.500 22q.5 5-2.500 5-2.500-1-3-8z" fill="#7a0606"/>
  <path d="M494.300 570H539v4.500h-41z" fill="#8e0505"/>
  <path d="M497.800 574.500h9.600l-2.600 21h-4.400zM509.200 574.500h7l-1.800 15.800h-3.400z" fill="#b80a0a"/>
  <rect x="510" y="471" width="14" height="2.500" fill="#d82828"/>
  <circle cx="508.800" cy="519.200" r="13.300" fill="#f2c21c"/>
  <g fill="#3c1e14"><path d="M508.800 519.200l-5.500-9.500a11 11 0 0 1 11 0z"/><path d="M508.800 519.200l11 0a11 11 0 0 1-5.500 9.500z"/><path d="M508.800 519.200l-5.500 9.500a11 11 0 0 1-5.500-9.500z"/></g>
  <circle cx="508.800" cy="519.200" r="3.400" fill="#f2c21c"/><circle cx="508.800" cy="519.200" r="2" fill="#3c1e14"/>
  <text x="524" y="525.500" font-family="Liberation Sans,sans-serif" font-weight="bold" font-size="15" fill="none" stroke="#f09090" stroke-width=".9" letter-spacing="1">EA</text>
  <path d="M522 509h17M522 531h17" stroke="#e85050" stroke-width=".8"/>
 </g>
</svg>

    <div class="abs" style="left:0;top:620.300px;width:549px;height:9px;background:#000"></div>
   </div>
   <svg class="abs" style="left:8px;top:-1px" width="28" height="12" viewBox="0 0 28 12"><path d="M0 .500h3l11 10.500 11-10.500h3" fill="#fff" stroke="#d0d0d0"/><path d="M3.500 0h21" stroke="#fff" stroke-width="2"/></svg>
  </div>
  <div id="tut">
   <h1>Now time to play...</h1>
   <p style="margin-top:16px">Try and block the zombies by positioning the items on top of them. Imagine that the webpage is a graph: you can move the objects (like the fridge) up from the bottom or in from the left in small increments called pixels (px).</p>
   <p style="margin-top:15px">Let's move the cooker.</p>
   <p style="margin-top:13px">In <span style="display:inline-block;padding-bottom:1px;border-bottom:1px dotted #555;-webkit-text-stroke:.3px #333">line 10</span> and <span style="display:inline-block;padding-bottom:1px;background:#b3d0f7;border-bottom:1px dotted #555;-webkit-text-stroke:.3px #333">line 11</span>, try changing the bottom and left values for the cooker to <b style="font-family:'Liberation Mono',monospace;font-size:13px">100px</b>.</p>
  </div>
 </div>
</div>

<div class="ln" style="left:126px;top:183px;width:146px"></div><div class="dot" style="left:267px;top:179px"></div>
<div class="ln" style="left:126px;top:222px;width:316px"></div><div class="dot" style="left:437px;top:217px"></div>
<div class="ln" style="left:126px;top:260px;width:166px"></div><div class="dot" style="left:287px;top:255px"></div>
<div class="ln" style="left:126px;top:588px;width:150px"></div><div class="dot" style="left:271px;top:583px"></div>
</body></html>
